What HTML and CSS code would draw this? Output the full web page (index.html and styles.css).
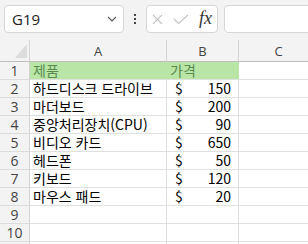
FILE: index.html
```html
<!DOCTYPE html>
<html lang="ko">
<head>
  <meta charset="UTF-8" />
  <title>Sheet</title>
  <link rel="stylesheet" href="styles.css">
</head>
<body>

<div class="toolbar">
  <div class="namebox">
    <span>G19</span>
    <svg class="chevron" width="10" height="6" viewBox="0 0 10 6"><path d="M1 1 L5 5 L9 1" fill="none" stroke="#555" stroke-width="1.1"/></svg>
  </div>
  <div class="dots"><i></i><i></i><i></i></div>
  <div class="fxbox">
    <svg width="11" height="11" viewBox="0 0 11 11"><path d="M1 1 L10 10 M10 1 L1 10" stroke="#c4c4c4" stroke-width="1.1"/></svg>
    <svg width="16" height="11" viewBox="0 0 16 11"><path d="M1 5 L5.5 9.5 L15 1" fill="none" stroke="#c4c4c4" stroke-width="1.1"/></svg>
    <span class="fx">fx</span>
  </div>
  <div class="formula"></div>
</div>

<div class="sheet">
  <div class="corner"><svg width="12" height="14" viewBox="0 0 12 14"><path d="M12 0 L12 14 L0 14 Z" fill="#dcdcdc"/></svg></div>
  <div class="colhead">A</div>
  <div class="colhead">B</div>
  <div class="colhead">C</div>

  <div class="rowhead">1</div>
  <div class="cell head-a">제품</div>
  <div class="cell head-b">가격</div>
  <div class="cell"></div>

  <div class="rowhead">2</div>
  <div class="cell">하드디스크 드라이브</div>
  <div class="cell money"><span>$</span><span>150</span></div>
  <div class="cell"></div>

  <div class="rowhead">3</div>
  <div class="cell">마더보드</div>
  <div class="cell money"><span>$</span><span>200</span></div>
  <div class="cell"></div>

  <div class="rowhead">4</div>
  <div class="cell">중앙처리장치(CPU)</div>
  <div class="cell money"><span>$</span><span>90</span></div>
  <div class="cell"></div>

  <div class="rowhead">5</div>
  <div class="cell">비디오 카드</div>
  <div class="cell money"><span>$</span><span>650</span></div>
  <div class="cell"></div>

  <div class="rowhead">6</div>
  <div class="cell">헤드폰</div>
  <div class="cell money"><span>$</span><span>50</span></div>
  <div class="cell"></div>

  <div class="rowhead">7</div>
  <div class="cell">키보드</div>
  <div class="cell money"><span>$</span><span>120</span></div>
  <div class="cell"></div>

  <div class="rowhead">8</div>
  <div class="cell">마우스 패드</div>
  <div class="cell money"><span>$</span><span>20</span></div>
  <div class="cell"></div>

  <div class="rowhead">9</div>
  <div class="cell"></div>
  <div class="cell"></div>
  <div class="cell"></div>

  <div class="rowhead">10</div>
  <div class="cell"></div>
  <div class="cell"></div>
  <div class="cell"></div>

  <div class="rowhead"></div>
  <div class="cell"></div>
  <div class="cell"></div>
  <div class="cell"></div>
</div>

</body>
</html>
```

FILE: styles.css
```css
* { box-sizing: border-box; }

body {
  margin: 0;
  width: 308px;
  height: 244px;
  overflow: hidden;
  background: #f3f3f3;
  font-family: "Open Sans", "Noto Sans CJK KR", sans-serif;
  color: #000;
}

.toolbar {
  display: flex;
  align-items: center;
  height: 40px;
  padding: 5px 0 7px 4px;
}

.toolbar > * { flex-shrink: 0; }

.namebox {
  width: 120px;
  height: 28px;
  background: #fff;
  border: 1px solid #d6d6d6;
  border-radius: 4px;
  display: flex;
  align-items: center;
  justify-content: space-between;
  padding: 0 6px 0 7px;
  font-size: 15px;
  color: #222;
}

.dots {
  width: 22px;
  display: flex;
  flex-direction: column;
  align-items: center;
  gap: 2px;
}

.dots i {
  width: 2px;
  height: 2px;
  background: #444;
}

.fxbox {
  width: 72px;
  height: 28px;
  background: #fff;
  border: 1px solid #d6d6d6;
  border-radius: 4px;
  display: flex;
  align-items: center;
  padding: 0 0 0 5px;
  gap: 10px;
}

.fx {
  font-family: "Liberation Serif", serif;
  font-style: italic;
  font-size: 18px;
  color: #333;
  margin-top: -2px;
}

.formula {
  width: 100px;
  height: 28px;
  margin-left: 6px;
  background: #fff;
  border: 1px solid #d6d6d6;
  border-radius: 4px;
}

.sheet {
  display: grid;
  grid-template-columns: 30px 137px 72px 80px;
  grid-template-rows: 22px repeat(11, 18px);
  font-size: 13px;
}

.corner {
  border-right: 1px solid #d4d4d4;
  border-bottom: 1px solid #bdbdbd;
  display: flex;
  align-items: flex-end;
  justify-content: flex-end;
  padding: 0 2px 3px 0;
}

.colhead {
  border-right: 1px solid #d4d4d4;
  border-bottom: 1px solid #bdbdbd;
  display: flex;
  align-items: center;
  justify-content: center;
  color: #444;
  padding-top: 1px;
}

.rowhead {
  border-right: 1px solid #d4d4d4;
  border-bottom: 1px solid #dcdcdc;
  display: flex;
  align-items: center;
  justify-content: center;
  color: #444;
  font-size: 14px;
  line-height: 17px;
}

.cell {
  background: #fff;
  border-right: 1px solid #e0e0e0;
  border-bottom: 1px solid #e0e0e0;
  padding: 0 3px;
  font-family: "Noto Sans CJK KR", sans-serif;
  font-size: 14px;
  line-height: 17px;
  white-space: nowrap;
}

.head-a,
.head-b {
  background: #b9e6a6;
  border-right-color: #b9e6a6;
  color: #5b8a50;
}

.money {
  display: flex;
  justify-content: space-between;
  padding: 0 7px 0 8px;
}
```
